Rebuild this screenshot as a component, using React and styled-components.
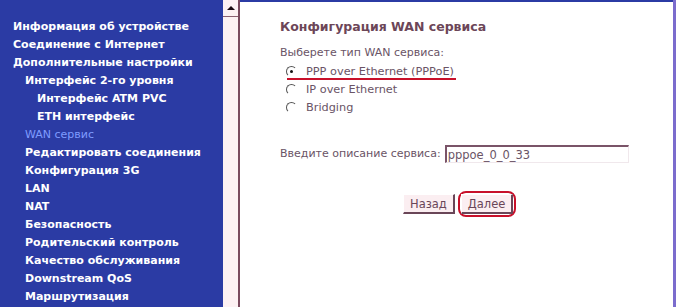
import React from 'react';
import styled, { createGlobalStyle } from 'styled-components';

const GlobalStyle = createGlobalStyle`
  html, body {
    margin: 0;
    padding: 0;
    background: #fff;
    overflow: hidden;
  }
`;

const Page = styled.div`
  display: flex;
  width: 678px;
  height: 307px;
  font-family: "DejaVu Sans", Tahoma, sans-serif;
`;

const Sidebar = styled.nav`
  width: 223px;
  flex-shrink: 0;
  background: #2b3ba4;
  padding-top: 18px;
  box-sizing: border-box;
`;

const MenuItem = styled.div`
  height: 18px;
  line-height: 18px;
  padding-left: ${(p) => 13 + p.level * 12}px;
  font-size: 11px;
  font-weight: ${(p) => (p.active ? 'normal' : 'bold')};
  color: ${(p) => (p.active ? '#7f9cff' : '#fff')};
  white-space: nowrap;
`;

const Scrollbar = styled.div`
  width: 15px;
  flex-shrink: 0;
  background: #fdf1f3;
  border-right: 2px solid #7a4a5e;
  display: flex;
  flex-direction: column;
`;

const ArrowButton = styled.div`
  height: 16px;
  border-bottom: 1px solid #8a6070;
  display: flex;
  align-items: center;
  justify-content: center;

  &::before {
    content: '';
    border-left: 4px solid transparent;
    border-right: 4px solid transparent;
    border-bottom: 4px solid #1a0a10;
  }
`;

const Content = styled.main`
  flex: 1;
  border-top: 2px solid #2b3ba4;
  padding: 17px 0 0 40px;
  color: #6a5466;
  font-size: 11px;
`;

const RightEdge = styled.div`
  width: 3px;
  flex-shrink: 0;
  background: #7b6ccd;
  margin-right: 2px;
`;

const Title = styled.div`
  font-weight: bold;
  font-size: 12.5px;
  color: #6c4658;
  line-height: 16px;
  margin-bottom: 10px;
`;

const Label = styled.div`
  line-height: 16px;
`;

const RadioList = styled.div`
  display: flex;
  flex-direction: column;
  margin-left: 6px;
  margin-top: 1px;
`;

const RadioRow = styled.label`
  display: flex;
  align-items: center;
  height: 18px;
  gap: 9px;
  position: relative;
  width: fit-content;
  font-size: 11.3px;
`;

const Radio = styled.span`
  width: 9px;
  height: 9px;
  border-radius: 50%;
  border-top: 1px solid #555;
  border-left: 1px solid #555;
  border-right: 1px solid #fff;
  border-bottom: 1px solid #fff;
  background: #fff;
  display: flex;
  align-items: center;
  justify-content: center;

  &::after {
    content: '';
    width: 3px;
    height: 3px;
    border-radius: 50%;
    background: ${(p) => (p.checked ? '#111' : 'transparent')};
  }
`;

const Underline = styled.span`
  position: absolute;
  left: 1px;
  right: -2px;
  bottom: 0;
  height: 2px;
  background: #c8102a;
`;

const FieldRow = styled.div`
  display: flex;
  align-items: center;
  gap: 4px;
  margin-top: 29px;
`;

const TextInput = styled.input`
  width: 184px;
  height: 18px;
  box-sizing: border-box;
  border-top: 2px solid #7a5468;
  border-left: 2px solid #7a5468;
  border-right: 1px solid #f0e8ec;
  border-bottom: 1px solid #f0e8ec;
  padding: 0 1px;
  font-family: "DejaVu Sans", Tahoma, sans-serif;
  font-size: 11.5px;
  color: #6a5466;
  outline: none;
`;

const Buttons = styled.div`
  display: flex;
  align-items: center;
  gap: 3px;
  margin-top: 28px;
  padding-left: 123px;
`;

const Button = styled.button`
  height: 20px;
  padding: 0 6px;
  background: #fbeef1;
  border-top: 1px solid #fff;
  border-left: 1px solid #fff;
  border-right: 2px solid #6a4658;
  border-bottom: 2px solid #6a4658;
  font-family: "DejaVu Sans", Tahoma, sans-serif;
  font-size: 11.5px;
  color: #6a4658;
`;

const Circled = styled.span`
  display: inline-flex;
  padding: 1px 1px;
  border: 2px solid #c8102a;
  border-radius: 8px;
`;

const menu = [
  { label: 'Информация об устройстве', level: 0 },
  { label: 'Соединение с Интернет', level: 0 },
  { label: 'Дополнительные настройки', level: 0 },
  { label: 'Интерфейс 2-го уровня', level: 1 },
  { label: 'Интерфейс ATM PVC', level: 2 },
  { label: 'ETH интерфейс', level: 2 },
  { label: 'WAN сервис', level: 1, active: true },
  { label: 'Редактировать соединения', level: 1 },
  { label: 'Конфигурация 3G', level: 1 },
  { label: 'LAN', level: 1 },
  { label: 'NAT', level: 1 },
  { label: 'Безопасность', level: 1 },
  { label: 'Родительский контроль', level: 1 },
  { label: 'Качество обслуживания', level: 1 },
  { label: 'Downstream QoS', level: 1 },
  { label: 'Маршрутизация', level: 1 },
];

const options = ['PPP over Ethernet (PPPoE)', 'IP over Ethernet', 'Bridging'];

const App = () => {
  return (
    <>
      <GlobalStyle />
      <Page>
        <Sidebar>
          {menu.map((m) => (
            <MenuItem key={m.label} level={m.level} active={m.active}>
              {m.label}
            </MenuItem>
          ))}
        </Sidebar>
        <Scrollbar>
          <ArrowButton />
        </Scrollbar>
        <Content>
          <Title>Конфигурация WAN сервиса</Title>
          <Label>Выберете тип WAN сервиса:</Label>
          <RadioList>
            {options.map((o, i) => (
              <RadioRow key={o}>
                <Radio checked={i === 0} />
                {o}
                {i === 0 && <Underline />}
              </RadioRow>
            ))}
          </RadioList>
          <FieldRow>
            <Label>Введите описание сервиса:</Label>
            <TextInput defaultValue="pppoe_0_0_33" />
          </FieldRow>
          <Buttons>
            <Button>Назад</Button>
            <Circled>
              <Button>Далее</Button>
            </Circled>
          </Buttons>
        </Content>
        <RightEdge />
      </Page>
    </>
  );
};

export default App;
